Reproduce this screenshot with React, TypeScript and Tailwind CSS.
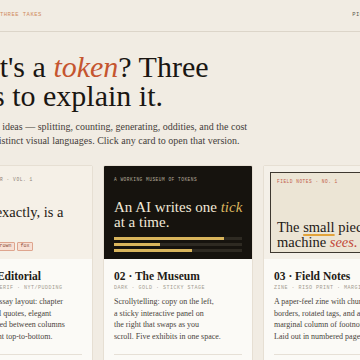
import { ReactNode } from 'react'

const serif = "font-['Liberation_Serif',serif]"
const mono = "font-['Liberation_Mono',monospace]"

type CardProps = {
  preview: ReactNode
  title: string
  meta: string
  lines: string[]
}

function Card({ preview, title, meta, lines }: CardProps) {
  return (
    <div className="border border-[#e6dfd3] bg-[#fbfaf6] rounded-[2px] overflow-hidden">
      <div className="h-[93px]">{preview}</div>
      <div className="px-[10px] pt-[11px]">
        <h3 className={`${serif} text-[11.5px] leading-[12px] font-bold text-[#1e1a15] whitespace-nowrap`}>
          {title}
        </h3>
        <div className={`${mono} mt-[3px] text-[5px] leading-[6px] tracking-[0.5px] text-[#a39c91] whitespace-nowrap`}>
          {meta}
        </div>
        <p className={`${serif} mt-[5px] text-[8px] leading-[11.5px] text-[#4a443c] whitespace-nowrap`}>
          {lines.map((l, i) => (
            <span key={i} className="block">
              {l}
            </span>
          ))}
        </p>
        <div className="mt-[12px] border-t border-[#e6e0d6] pt-[6px] pb-[8px]">
          <span className={`${mono} text-[5px] tracking-[0.5px] text-[#8a8378]`}>OPEN THIS VERSION →</span>
        </div>
      </div>
    </div>
  )
}

function EditorialPreview() {
  const chips = ['A', 'quick', 'brown', 'fox']
  return (
    <div className="h-full bg-[#f5f0e7] px-[13px] pt-[11px] flex flex-col">
      <div className={`${mono} text-[4.5px] leading-[5px] tracking-[0.6px] text-[#8a7f74] whitespace-nowrap`}>
        A TOKEN PRIMER · VOL. 1
      </div>
      <h4 className={`${serif} mt-[22px] text-[14.5px] leading-[16px] text-[#1e1a15] whitespace-nowrap`}>
        What, exactly, is a
        <br />
        token?
      </h4>
      <div className="mt-[6px] flex gap-[2px]">
        {chips.map((c) => (
          <span
            key={c}
            className={`${mono} h-[9px] px-[2.5px] flex items-center border border-[#dea58e] bg-[#f8e0d4] text-[5px] text-[#8b4a37] rounded-[1px]`}
          >
            {c}
          </span>
        ))}
      </div>
    </div>
  )
}

function MuseumPreview() {
  const bars = [110, 46, 78]
  return (
    <div className="h-full bg-[#16130e] px-[10px] pt-[11px] flex flex-col">
      <div className={`${mono} text-[4.5px] leading-[5px] tracking-[0.5px] text-[#b4ab9b] whitespace-nowrap`}>
        A WORKING MUSEUM OF TOKENS
      </div>
      <h4 className={`${serif} mt-[18px] text-[15px] leading-[14.5px] text-[#f2e9d8] whitespace-nowrap`}>
        An AI writes one <em className="text-[#dcb65e]">tick</em>
        <br />
        at a time.
      </h4>
      <div className="mt-[8px] flex flex-col gap-[3px]">
        {bars.map((w, i) => (
          <div key={i} className="h-[3px] bg-[#2e2a22]">
            <div className="h-full bg-[#d9b55c]" style={{ width: w }} />
          </div>
        ))}
      </div>
    </div>
  )
}

function FieldPreview() {
  return (
    <div className="h-full bg-[#f4f0e8] p-[6px]">
      <div className="relative h-full border border-[#3e3830] bg-[#ece5d5] px-[6px] pt-[6px] flex flex-col">
        <div className={`${mono} text-[4.5px] leading-[5px] tracking-[0.5px] text-[#c25d4b] whitespace-nowrap`}>
          FIELD NOTES · NO. 1
        </div>
        <div
          className={`${mono} absolute top-[4px] right-[10px] rotate-[4deg] border border-[#c9553f] px-[3px] py-[3px] text-[4.5px] leading-[5px] tracking-[0.4px] text-[#c9553f]`}
        >
          SPECIMEN
        </div>
        <h4 className={`${serif} mt-auto mb-[2px] text-[14.5px] leading-[15px] text-[#1e1a15] whitespace-nowrap`}>
          The{' '}
          <span className="underline decoration-[#e2a33b] decoration-[2px] underline-offset-[2px]">small</span>{' '}
          pieces a
          <br />
          machine <em className="text-[#c2483a]">sees.</em>
        </h4>
      </div>
    </div>
  )
}

export default function App() {
  return (
    <div className="w-[360px] h-[360px] overflow-hidden bg-[#f1ece3]">
      <div className="ml-[-57px] w-[470px]">
        <header className="h-[32px] pt-[12px] flex items-start justify-between border-b border-[#dcd5c9]">
          <span className={`${mono} text-[5.5px] leading-[6px] tracking-[0.5px] text-[#d08a5c] whitespace-nowrap`}>
            TOKEN PRIMER · THREE TAKES
          </span>
          <span className={`${mono} text-[5.5px] leading-[6px] tracking-[0.5px] text-[#5f5950] whitespace-nowrap`}>
            PICK A VERSION →
          </span>
        </header>

        <h1 className={`${serif} mt-[20px] text-[30px] leading-[29px] text-[#1a1612] whitespace-nowrap`}>
          What's a <em className="text-[#c5552f]">token</em>? Three
          <br />
          ways to explain it.
        </h1>
        <p className={`${serif} mt-[10px] text-[10px] leading-[14px] text-[#45403a] whitespace-nowrap`}>
          The same five ideas — splitting, counting, generating, oddities, and the cost
          <br />
          told in three distinct visual languages. Click any card to open that version.
        </p>

        <div className="mt-[17px] grid grid-cols-3 gap-[10px]">
          <Card
            preview={<EditorialPreview />}
            title="01 · The Editorial"
            meta="LONG-FORM · SERIF · NYT/PUDDING"
            lines={[
              'A long-form essay layout: chapter',
              'drop caps, pull quotes, elegant',
              'sidenotes tucked between columns',
              'reading straight top-to-bottom.',
            ]}
          />
          <Card
            preview={<MuseumPreview />}
            title="02 · The Museum"
            meta="DARK · GOLD · STICKY STAGE"
            lines={[
              'Scrollytelling: copy on the left,',
              'a sticky interactive panel on',
              'the right that swaps as you',
              'scroll. Five exhibits in one space.',
            ]}
          />
          <Card
            preview={<FieldPreview />}
            title="03 · Field Notes"
            meta="ZINE · RISO PRINT · MARGINALIA"
            lines={[
              'A paper-feel zine with chunky',
              'borders, rotated tags, and a',
              'marginal column of footnotes.',
              'Laid out in numbered pages.',
            ]}
          />
        </div>
      </div>
    </div>
  )
}
